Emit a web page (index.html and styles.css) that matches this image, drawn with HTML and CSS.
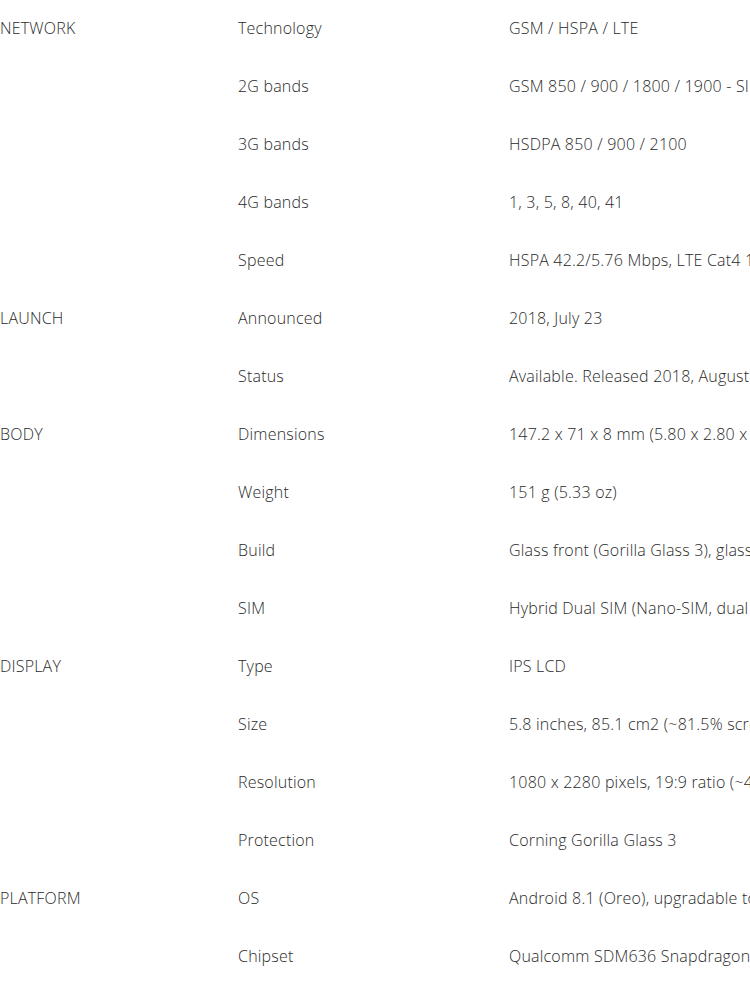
FILE: index.html
```html
<!DOCTYPE html>
<html>
<head>
<meta charset="utf-8">
<link rel="stylesheet" href="styles.css">
</head>
<body>
<div class="specs">
  <div class="cat">NETWORK</div><div class="label">Technology</div><div class="val">GSM / HSPA / LTE</div>
  <div class="cat"></div><div class="label">2G bands</div><div class="val">GSM 850 / 900 / 1800 / 1900 - SIM 1 &amp; SIM 2</div>
  <div class="cat"></div><div class="label">3G bands</div><div class="val">HSDPA 850 / 900 / 2100</div>
  <div class="cat"></div><div class="label">4G bands</div><div class="val">1, 3, 5, 8, 40, 41</div>
  <div class="cat"></div><div class="label">Speed</div><div class="val">HSPA 42.2/5.76 Mbps, LTE Cat4 150/50 Mbps</div>
  <div class="cat">LAUNCH</div><div class="label">Announced</div><div class="val">2018, July 23</div>
  <div class="cat"></div><div class="label">Status</div><div class="val">Available. Released 2018, August</div>
  <div class="cat">BODY</div><div class="label">Dimensions</div><div class="val">147.2 x 71 x 8 mm (5.80 x 2.80 x 0.31 in)</div>
  <div class="cat"></div><div class="label">Weight</div><div class="val">151 g (5.33 oz)</div>
  <div class="cat"></div><div class="label">Build</div><div class="val">Glass front (Gorilla Glass 3), glass back, aluminum frame</div>
  <div class="cat"></div><div class="label">SIM</div><div class="val">Hybrid Dual SIM (Nano-SIM, dual stand-by)</div>
  <div class="cat">DISPLAY</div><div class="label">Type</div><div class="val">IPS LCD</div>
  <div class="cat"></div><div class="label">Size</div><div class="val">5.8 inches, 85.1 cm2 (~81.5% screen-to-body ratio)</div>
  <div class="cat"></div><div class="label">Resolution</div><div class="val">1080 x 2280 pixels, 19:9 ratio (~432 ppi density)</div>
  <div class="cat"></div><div class="label">Protection</div><div class="val">Corning Gorilla Glass 3</div>
  <div class="cat">PLATFORM</div><div class="label">OS</div><div class="val">Android 8.1 (Oreo), upgradable to Android 10</div>
  <div class="cat"></div><div class="label">Chipset</div><div class="val">Qualcomm SDM636 Snapdragon 636 (14 nm)</div>
</div>
</body>
</html>
```
FILE: styles.css
```css
html, body {
  margin: 0;
  padding: 0;
  background: #ffffff;
  overflow: hidden;
}
.specs {
  display: grid;
  grid-template-columns: 238px 271px 1fr;
  font-family: "Open Sans", sans-serif;
  font-weight: 300;
  font-size: 16px;
  letter-spacing: 0.2px;
  color: #2a2a2a;
  width: 750px;
  overflow: hidden;
}
.cat, .label, .val {
  height: 58px;
  line-height: 56px;
  white-space: nowrap;
  overflow: hidden;
}
```
